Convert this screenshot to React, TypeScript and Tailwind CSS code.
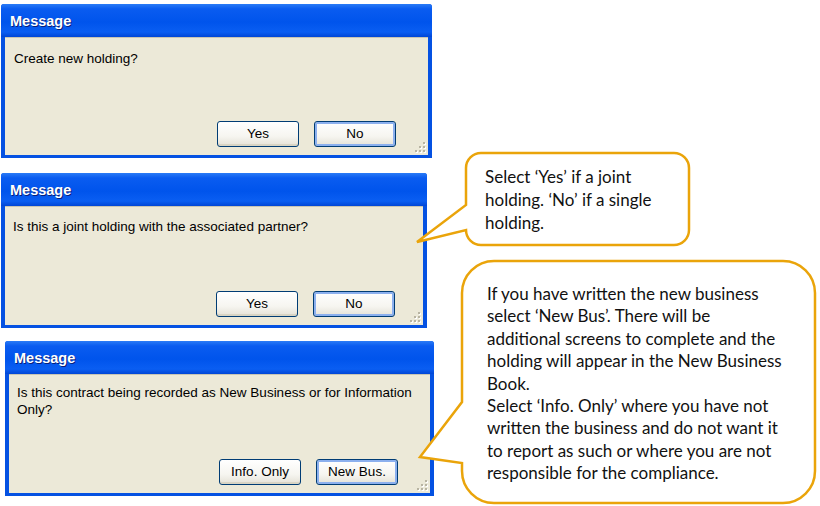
import type { ReactNode } from "react";

const Grip = () => (
  <svg width="12" height="12" viewBox="0 0 12 12" className="absolute right-[2px] bottom-[2px]">
    {[
      [9, 1],
      [5, 5],
      [9, 5],
      [1, 9],
      [5, 9],
      [9, 9],
    ].map(([x, y]) => (
      <g key={`${x}-${y}`}>
        <rect x={x + 1} y={y + 1} width="2" height="2" fill="#ffffff" />
        <rect x={x} y={y} width="2" height="2" fill="#b8b4a2" />
      </g>
    ))}
  </svg>
);

const XpButton = ({ label, isDefault }: { label: string; isDefault?: boolean }) => (
  <button
    className={`w-[82px] h-[26px] rounded-[3px] border border-[#003c74] bg-[linear-gradient(to_bottom,#ffffff_0%,#f6f5f0_60%,#e4e1d6_100%)] text-[13.5px] text-black ${
      isDefault ? "shadow-[inset_0_0_0_2px_#8cb0ee]" : "shadow-[inset_0_-2px_0_#d8d4c4]"
    }`}
  >
    {label}
  </button>
);

const Dialog = ({
  className,
  children,
  buttons,
  textPad,
  btnPad,
}: {
  className: string;
  children: ReactNode;
  buttons: ReactNode;
  textPad: string;
  btnPad: string;
}) => (
  <div className={`flex flex-col rounded-t-[3px] bg-[#0451e2] ${className}`}>
    <div className="h-[33px] shrink-0 rounded-t-[3px] bg-[linear-gradient(to_bottom,#2a7bf6_0%,#0a5cf0_15%,#0054ec_55%,#0a5ef2_85%,#0046d6_100%)] flex items-center pl-[9px] pt-[3px]">
      <span className="text-white font-bold text-[14.5px] [text-shadow:1px_1px_0_#0a1f7a]">Message</span>
    </div>
    <div className="relative flex-1 mx-[4px] mb-[3px] bg-[#ece9d8] border-t border-[#c8c5b4] flex flex-col">
      <div className={`text-[13.5px] leading-[17px] text-black ${textPad}`}>{children}</div>
      <div className={`mt-auto flex justify-end gap-[15px] pb-[8px] ${btnPad}`}>{buttons}</div>
      <Grip />
    </div>
  </div>
);

const Callout = ({
  className,
  path,
  children,
}: {
  className: string;
  path: string;
  children: ReactNode;
}) => (
  <div className={`relative ${className}`}>
    <svg className="absolute left-0 top-0 w-full h-full overflow-visible" fill="none">
      <path d={path} fill="#ffffff" stroke="#eaa40a" strokeWidth="2.5" strokeLinejoin="miter" />
    </svg>
    <div className="relative text-[17px] text-[#111] font-['Lato','Open_Sans',sans-serif]">{children}</div>
  </div>
);

// callout outlines, box-relative coordinates, tail reaching left over the dialogs
const smallPath =
  "M15 0 H208 A15 15 0 0 1 223 15 V77 A15 15 0 0 1 208 92 H15 A15 15 0 0 1 0 77 V77 L-49 89 L0 52 V15 A15 15 0 0 1 15 0 Z";
const bigPath =
  "M32 0 H321 A32 32 0 0 1 353 32 V210 A32 32 0 0 1 321 242 H32 A32 32 0 0 1 0 210 V202 L-42 196 L0 141 V32 A32 32 0 0 1 32 0 Z";

export default function App() {
  return (
    <div className="w-[820px] h-[506px] bg-white overflow-hidden flex font-['Liberation_Sans',Arial,sans-serif]">
      <div className="w-[434px] shrink-0 flex flex-col">
        <Dialog
          className="ml-[1px] mt-[4px] w-[431px] h-[154px]"
          textPad="pl-[9px] pt-[12px]"
          btnPad="pr-[32px]"
          buttons={
            <>
              <XpButton label="Yes" />
              <XpButton label="No" isDefault />
            </>
          }
        >
          Create new holding?
        </Dialog>
        <Dialog
          className="ml-[1px] mt-[15px] w-[426px] h-[155px]"
          textPad="pl-[8px] pt-[11px]"
          btnPad="pr-[28px]"
          buttons={
            <>
              <XpButton label="Yes" />
              <XpButton label="No" isDefault />
            </>
          }
        >
          Is this a joint holding with the associated partner?
        </Dialog>
        <Dialog
          className="ml-[5px] mt-[13px] w-[429px] h-[155px]"
          textPad="pl-[8px] pt-[9px]"
          btnPad="pr-[32px]"
          buttons={
            <>
              <XpButton label="Info. Only" />
              <XpButton label="New Bus." isDefault />
            </>
          }
        >
          Is this contract being recorded as New Business or for Information
          <br />
          Only?
        </Dialog>
      </div>
      <div className="flex flex-col">
        <Callout className="ml-[32px] mt-[153px] w-[223px] h-[92px]" path={smallPath}>
          <div className="pl-[19px] pt-[12px] leading-[23px]">
            Select ‘Yes’ if a joint
            <br />
            holding. ‘No’ if a single
            <br />
            holding.
          </div>
        </Callout>
        <Callout className="ml-[28px] mt-[16px] w-[353px] h-[242px]" path={bigPath}>
          <div className="pl-[25px] pt-[22px] leading-[22.4px]">
            If you have written the new business
            <br />
            select ‘New Bus’. There will be
            <br />
            additional screens to complete and the
            <br />
            holding will appear in the New Business
            <br />
            Book.
            <br />
            Select ‘Info. Only’ where you have not
            <br />
            written the business and do not want it
            <br />
            to report as such or where you are not
            <br />
            responsible for the compliance.
          </div>
        </Callout>
      </div>
    </div>
  );
}
